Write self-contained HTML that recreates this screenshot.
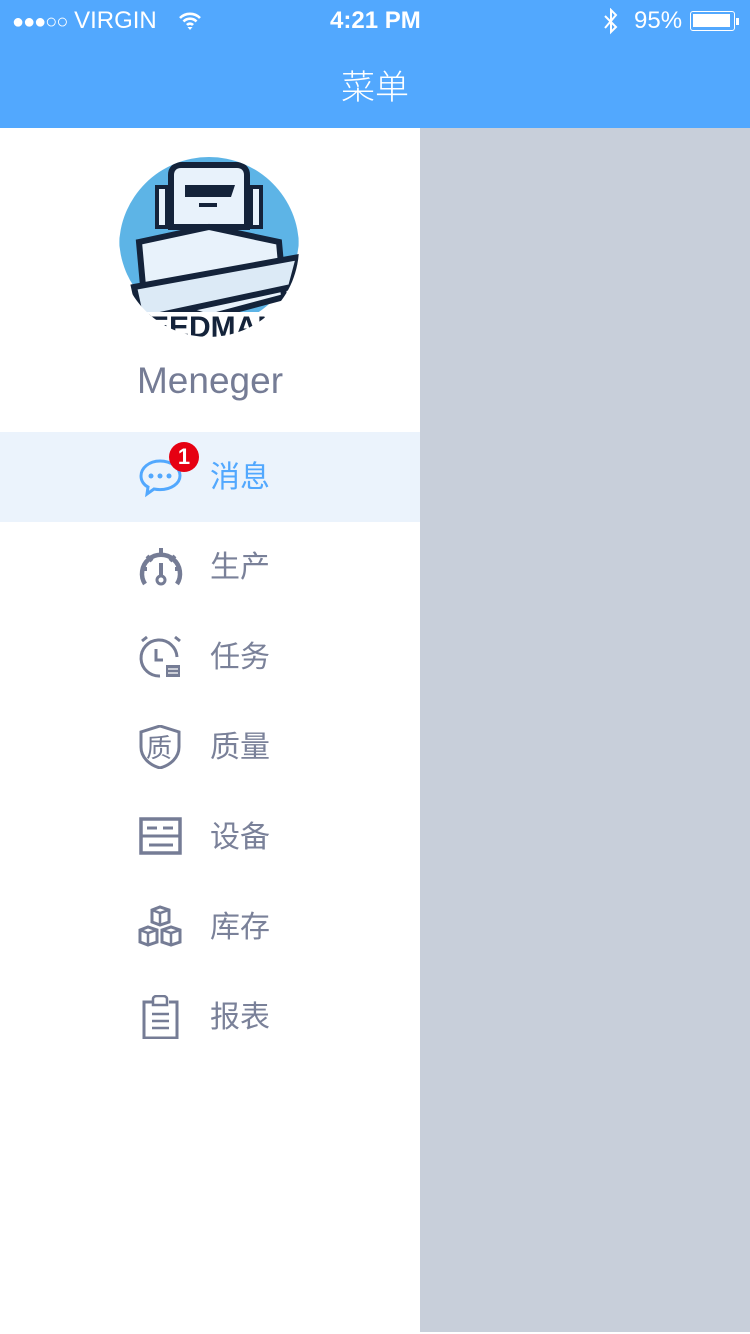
<!DOCTYPE html>
<html><head><meta charset="utf-8"><style>
*{margin:0;padding:0;box-sizing:border-box}
body{width:750px;height:1334px;position:relative;overflow:hidden;background:#fff;font-family:"Liberation Sans","Noto Sans CJK SC",sans-serif}
.hdr{position:absolute;left:0;top:0;width:750px;height:128px;background:#52a8fe;color:#fff}
.sb{position:absolute;top:7px;font-size:24px}
.title{position:absolute;top:60px;width:750px;text-align:center;font-size:34px;font-family:"Noto Sans CJK SC",sans-serif;font-weight:300}
.right{position:absolute;left:420px;top:128px;width:330px;height:1204px;background:#c8cfda}
.name{position:absolute;left:0;width:420px;top:360px;text-align:center;font-size:37px;color:#757c95}
.item{position:absolute;left:0;width:420px;height:90px}
.item svg{position:absolute;left:138px;top:23px}
.item span{position:absolute;left:210px;top:20px;font-size:30px;color:#7a8199;font-family:"Noto Sans CJK SC",sans-serif;font-weight:400}
</style></head><body>
<div class="hdr">
 <div class="sb" style="left:12px"><span style="font-size:20px;letter-spacing:-1px">●●●○○</span> VIRGIN</div>
 <svg style="position:absolute;left:178px;top:11px" width="24" height="20" viewBox="0 0 24 20"><path d="M2 7a14 14 0 0 1 20 0M5.5 10.5a9 9 0 0 1 13 0M9 14a4 4 0 0 1 6 0" stroke="#fff" stroke-width="2.6" fill="none"/><path d="M12 19l-2.5-3h5z" fill="#fff"/></svg>
 <div class="sb" style="left:330px;font-weight:bold">4:21 PM</div>
 <svg style="position:absolute;left:602px;top:8px" width="18" height="28" viewBox="0 0 18 28"><path d="M3 8l11 11-5 5V2l5 5L3 20" stroke="#fff" stroke-width="2" fill="none"/></svg>
 <div class="sb" style="left:634px">95%</div>
 <div style="position:absolute;left:690px;top:11px;width:45px;height:20px;border:1.5px solid #fff;border-radius:3px;padding:2px"><div style="width:37px;height:13px;background:#fff"></div></div>
 <div style="position:absolute;left:736px;top:18px;width:3px;height:7px;background:#fff"></div>
 <div class="title">菜单</div>
</div>
<div class="right"></div>
<svg style="position:absolute;left:119px;top:157px" width="180" height="180" viewBox="0 0 180 180">
<defs><clipPath id="c"><circle cx="90" cy="90" r="90"/></clipPath></defs>
<g clip-path="url(#c)">
<rect width="180" height="180" fill="#fff"/>
<circle cx="90" cy="80" r="90" fill="#5db4e6"/>
<path d="M38 30h10v40H38zM132 30h10v40h-10z" fill="#e8f2fb" stroke="#14233a" stroke-width="4"/>
<path d="M62 8h56c6 0 10 4 10 10v52H52V18c0-6 4-10 10-10z" fill="#e8f2fb" stroke="#14233a" stroke-width="6"/>
<path d="M66 28h50l-4 12H66z" fill="#14233a"/>
<path d="M80 48h18" stroke="#14233a" stroke-width="4"/>
<path d="M20 85l70-15 70 15 5 55-75 20-65-20z" fill="#e8f2fb" stroke="#14233a" stroke-width="6"/>
<path d="M15 130l165-30-8 30-150 32z" fill="#dceaf6" stroke="#14233a" stroke-width="6"/>
<path d="M20 155h170v30H20z" fill="#fff"/>
<text x="30" y="180" font-size="30" font-weight="bold" fill="#14233a" font-family="Liberation Sans">EEDMAN</text>
</g></svg>
<div class="name">Meneger</div>

<div class="item" style="top:432px;background:#ebf3fc">
<svg width="48" height="44" viewBox="0 0 48 44"><path d="M22 6C11 6 3 13 3 21c0 5 3 9 7 11l-1 7 7-5c2 .4 4 .6 6 .6 11 0 20-6 20-14S33 6 22 6z" fill="none" stroke="#52a8fe" stroke-width="3"/><circle cx="13" cy="21" r="2.5" fill="#52a8fe"/><circle cx="22" cy="21" r="2.5" fill="#52a8fe"/><circle cx="31" cy="21" r="2.5" fill="#52a8fe"/></svg>
<div style="position:absolute;left:169px;top:10px;width:30px;height:30px;border-radius:50%;background:#e60012;color:#fff;font-weight:bold;font-size:22px;text-align:center;line-height:30px">1</div>
<span style="color:#52a8fe">消息</span></div>

<div class="item" style="top:522px"><svg width="46" height="44" viewBox="0 0 46 44"><path d="M7 39A19 19 0 1 1 39 39" fill="none" stroke="#757c95" stroke-width="4.5"/><path d="M23 3v7M9 11l5 5M37 11l-5 5M3 24h6M43 24h-6M23 18v13" stroke="#757c95" stroke-width="4"/><circle cx="23" cy="35" r="4" fill="#fff" stroke="#757c95" stroke-width="3"/></svg><span>生产</span></div>

<div class="item" style="top:612px"><svg width="46" height="44" viewBox="0 0 46 44"><path d="M39 22A18 18 0 1 0 22 41" fill="none" stroke="#757c95" stroke-width="3"/><path d="M4 6l5-4M42 6l-5-4M18 14v11h7" stroke="#757c95" stroke-width="3" fill="none"/><rect x="28" y="30" width="14" height="12" fill="#757c95"/><path d="M30 34h10M30 38h10" stroke="#fff" stroke-width="1.2"/></svg><span>任务</span></div>

<div class="item" style="top:702px"><svg width="46" height="44" viewBox="0 0 46 44"><path d="M22 1l19 6v15c0 10-8 18-19 21C11 40 3 32 3 22V7z" fill="none" stroke="#757c95" stroke-width="3"/><text x="8" y="32" font-size="26" fill="#757c95" font-family="Noto Sans CJK SC">质</text></svg><span>质量</span></div>

<div class="item" style="top:792px"><svg width="46" height="44" viewBox="0 0 46 44"><rect x="3" y="4" width="39" height="34" fill="none" stroke="#757c95" stroke-width="3.5"/><path d="M3 21h39M9 13h10M25 13h10M11 30h24" stroke="#757c95" stroke-width="3"/></svg><span>设备</span></div>

<div class="item" style="top:882px"><svg width="46" height="44" viewBox="0 0 46 44"><path d="M14 5l8-3 9 3v12l-9 3-8-3zM2 25l8-3 9 3v12l-9 3-8-3zM24 25l9-3 9 3v12l-9 3-9-3z" fill="none" stroke="#757c95" stroke-width="3"/><path d="M14 5l8 3 9-3M22 8v12M2 25l8 3 9-3M10 28v12M24 25l9 3 9-3M33 28v12" stroke="#757c95" stroke-width="2.5" fill="none"/></svg><span>库存</span></div>

<div class="item" style="top:972px"><svg width="46" height="44" viewBox="0 0 46 44"><path d="M14 7H6v36h33V7h-8" fill="none" stroke="#757c95" stroke-width="3"/><path d="M15 10V4c0-2 2-3 4-3h6c2 0 4 1 4 3v6z" fill="none" stroke="#757c95" stroke-width="2.5"/><path d="M14 19h17M14 26h17M14 33h17" stroke="#757c95" stroke-width="2.5"/></svg><span>报表</span></div>
</body></html>
